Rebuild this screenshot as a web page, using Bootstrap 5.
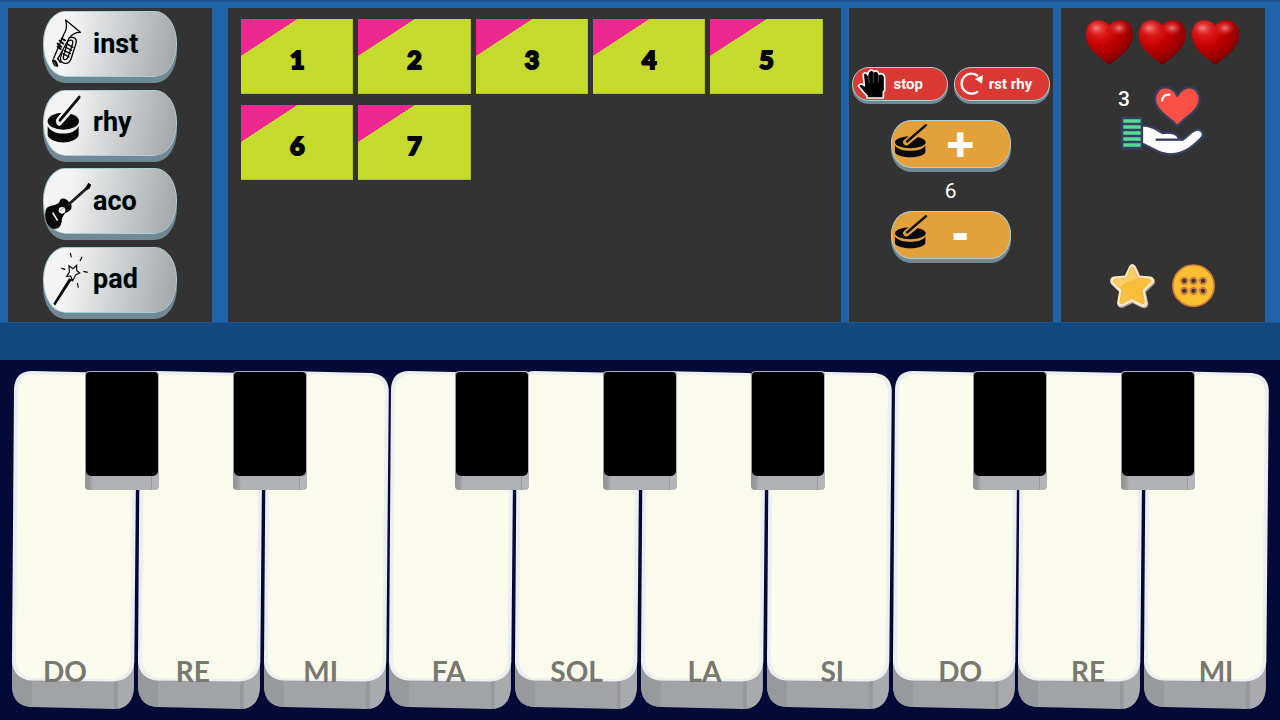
<!DOCTYPE html>
<html lang="en">
<head>
<meta charset="utf-8">
<meta name="viewport" content="width=device-width, initial-scale=1">
<title>Piano</title>
<link href="https://cdn.jsdelivr.net/npm/bootstrap@5.3.0/dist/css/bootstrap.min.css" rel="stylesheet">
<style>
  body { background: #040a38; font-family: Roboto, sans-serif; }
  button { border: 0; padding: 0; background: none; }
  svg { display: block; overflow: visible; }
  symbol { overflow: visible; }
  .deck { background: #1f64a9; border-top: 2px solid #1a5292; }
  .board { display: grid; grid-template-columns: 1fr 0 3fr 1fr 1fr; column-gap: 8px; padding: 6px 15px 0 8px; }
  .panel { background: #333; min-width: 0; }
  .panel-pads { grid-column: 3; padding: 11px 18px 0 13px; }
  .ledge { height: 38px; background: #13497e; border-top: 1px solid #1a568f; }

  .caption { font-family: Roboto, sans-serif; font-weight: 700; line-height: 1; }
  .key3d { display: flex; align-items: center; border: 1px solid #a9cfdb; }
  .sound { width: 134px; height: 66px; margin-bottom: 6px; border-radius: 22px / 32px; color: #000;
    background: linear-gradient(100deg, #f4f4f4 20%, #dcddde 42%, #c2c3c4 68%, #a6a7aa 96%); box-shadow: 0 6px 0 #708995; font-size: 27px;
    text-shadow: 0 0 1px #6bd0dc; }
  .sound svg { width: 48px; height: 65px; margin-right: 1px; }
  .rhythm { width: 96px; height: 34px; margin-bottom: 3px; border-radius: 17px; background: #da3832; box-shadow: 0 3px 0 #708995; color: #fff; font-size: 15px; padding-right: 17px; }
  .rhythm svg { width: 34px; height: 34px; }
  .tempo { width: 120px; height: 48px; margin-bottom: 4px; border-radius: 20px / 23px; background: #e3a03b; box-shadow: 0 4px 0 #708995; color: #fff;
    font: 700 36px/1 "DejaVu Sans", sans-serif; padding-right: 21px; -webkit-text-stroke: 2px #fff; text-shadow: 0 -1px 0 #ffe500; }
  .tempo svg { width: 40px; height: 47px; }
  .count { color: #fff; font-size: 21px; line-height: 39px; }

  .pads { display: grid; grid-template-columns: repeat(5, 1fr); gap: 11px 5px; }
  .pad { height: 75px; color: #000; font: 900 25px/1 Lato, sans-serif; padding-top: 6px; -webkit-text-stroke: 2px #000;
    background: linear-gradient(to bottom right, #ee2891 50%, transparent 50.5%) 0 0 / 50% 49% no-repeat #c6d92d;
    box-shadow: inset -1px -1px 0 #b1c22b; }

  .hearts { gap: 6px; margin-top: 12px; }
  .hearts svg { width: 47px; height: 45px; }
  .gift { width: 86px; margin-top: 20px; }
  .gift span { position: absolute; top: 0; left: -2px; line-height: 28px; font-size: 21px; font-weight: 500; color: #fff; }
  .extras { gap: 17px; margin-bottom: 13px; }

  .piano { padding: 11px 14px 11px 12px; }
  .ivories { display: grid; grid-template-columns: repeat(10, 1fr); column-gap: 4px; height: 100%; }
  .ivories svg { width: 100%; height: 100%; }
  .ebonies { position: absolute; inset: 11px 11px auto 11px; height: 33%; display: grid; grid-template-columns: repeat(17, 1fr); pointer-events: none; }
  .ebonies button { pointer-events: auto; border-radius: 4px; padding: 1px 1px 14px; grid-row: 1;
    background: linear-gradient(90deg, #95969a 0 5%, #b0b1b5 11% 89%, #96979b 90%, #b4b5b9 91%); }
  .ebonies i { display: block; height: 100%; background: #000; border-radius: 4px 4px 5px 5px; }
  .notes { position: absolute; inset: auto 0 32px 0; display: grid; grid-template-columns: repeat(10, 1fr); pointer-events: none;
    text-align: center; padding-left: 1px; color: #77786f; font: 700 28px/34px Lato, sans-serif; }
</style>
</head>
<body>
<svg width="0" height="0" class="position-absolute" aria-hidden="true">
  <defs>
    <radialGradient id="shine" cx=".28" cy=".2" r=".95"><stop offset="0" stop-color="#e83c3c"/><stop offset=".2" stop-color="#d81414"/><stop offset=".4" stop-color="#c40000"/><stop offset=".7" stop-color="#900"/><stop offset="1" stop-color="#400"/></radialGradient>
    <radialGradient id="glint"><stop offset="0" stop-color="#f59a98" stop-opacity=".8"/><stop offset="1" stop-color="#e03030" stop-opacity="0"/></radialGradient>
    <linearGradient id="gold" x1="0" y1="1" x2=".5" y2="0"><stop offset="0" stop-color="#f8c550"/><stop offset=".5" stop-color="#f7bd35"/><stop offset="1" stop-color="#f6c04a"/></linearGradient>
    <symbol id="heart" viewBox="78 63 139 132">
      <path d="M147 79 C157 66 171 63 182 63 C204 64 217 82 217 105 C217 147 176 171 147 195 C118 171 78 147 78 105 C78 82 91 63 113 63 C126 63 139 68 147 79Z" fill="url(#shine)"/>
      <ellipse cx="176" cy="86" rx="30" ry="23" fill="url(#glint)"/><ellipse cx="108" cy="86" rx="30" ry="23" fill="url(#glint)"/>
    </symbol>
    <symbol id="drum" viewBox="162 210 98 104" preserveAspectRatio="none">
      <path d="M162 277 C170 289 190 293 208 293 C226 293 246 289 253 277 V297 C249 307 228 312 208 312 C188 312 166 307 162 297Z" fill="#050708"/>
      <ellipse cx="208" cy="267" rx="46" ry="18" fill="#050708"/>
      <path d="M196 267 L232 238" stroke="var(--face)" stroke-width="19" stroke-linecap="round"/>
      <path d="M198 265 L255 216" stroke="#050708" stroke-width="7" stroke-linecap="round"/>
    </symbol>
    <symbol id="ivory" viewBox="0 0 122 338" preserveAspectRatio="none">
      <path d="M0 280 L122 280 V317 Q121 337 102 338 L20 336 Q1 335 0 316Z" fill="#a2a3a7"/>
      <path d="M0 285 V316 Q1 335 20 336 V300Z" fill="#98999d"/>
      <path d="M102 300 H106 V337.500 H102Z" fill="#98999d"/>
      <path d="M106 305 L122 285 V317 Q121 335 106 338Z" fill="#a9aaae"/>
      <path d="M2 18 Q3 0 20 0 L108 2 Q124 4 125 19 L122.500 291 Q121 309 102 310.500 L19 309.500 Q2 308 0 291Z" fill="#eceef0"/>
      <path d="M6 18 Q7 4 22 3.500 L106 5 Q120 7 121 20 L118.500 290 Q117 306 102 308 L20 307 Q5 305 4 289Z" fill="#fbfbed"/>
    </symbol>
  </defs>
</svg>

<main class="vh-100">
  <section class="deck h-50 d-flex flex-column">
    <div class="board flex-grow-1">
      <div class="panel d-flex flex-column align-items-center justify-content-around">
        <button class="sound key3d caption">
          <svg viewBox="135 33 144 195" fill="none" stroke="#050708" stroke-width="4" stroke-linejoin="round" stroke-linecap="round">
            <path d="M200 57 L244 94 C230 93 220 99 211 111 L176 174 M200 57 C205 74 203 87 194 101 L164 172"/>
            <path d="M161 177 Q173 178 176 195 L168 194 Q161 187 161 177Z" fill="#f2f2f2"/>
            <path d="M165 181 L174 194 M176 172 L184 184"/>
            <path d="M211 110 Q236 106 231 127 L216 174 C210 192 186 191 184 173 L190 150"/>
            <path d="M207 120 C220 114 223 120 221 128 L208 166 C204 179 192 179 193 168Z"/>
            <path d="M203 128 L222 139 M199 138 L218 148 M195 148 L214 158 M192 158 L210 168"/>
            <path d="M176 128 L187 137 M182 119 L193 128 M188 113 L198 118 M176 137 L185 144" stroke-width="6"/>
          </svg>inst</button>
        <button class="sound key3d caption" style="--face:#f0f0f0">
          <svg viewBox="135 267 144 195"><use href="#drum" x="146" y="280" width="100" height="147"/></svg>rhy</button>
        <button class="sound key3d caption">
          <svg viewBox="135 21 144 195">
            <path d="M143 139 C151 129 167 132 178 124 C184 119 180 113 188 110 C197 107 207 114 210 121 C217 124 220 133 216 142 C211 152 199 150 195 158 C187 167 190 179 185 190 C178 203 163 204 152 194 C138 182 135 152 143 139Z" fill="#050708"/>
            <path d="M194 141 L264 78" stroke="#050708" stroke-width="8"/><path d="M259 78 L268 62 L277 68 L272 79 L264 85Z" fill="#050708"/>
            <path d="M207 130 L260 82" stroke="#fff" stroke-width="1.500" stroke-dasharray="3 4"/>
            <circle cx="189" cy="145" r="10" fill="#f4f4f4"/><path d="M182 147 L198 134" stroke="#888" stroke-width="2"/>
            <path d="M161 152 L176 176" stroke="#f4f4f4" stroke-width="5"/>
          </svg>aco</button>
        <button class="sound key3d caption">
          <svg viewBox="135 258 144 195" fill="none" stroke="#050708" stroke-width="3.500">
            <path d="M218 357 L213 361 L168 431 L165 428 L211 354Z" fill="#050708"/>
            <path d="M210 314 L222 323 L233 313 L233 329 L242 336 L230 342 L221 359 L215 345 L203 346 L211 333Z" fill="#f3f3f3"/>
            <path d="M214 276 L217 289 M249 287 L243 300 M187 322 L199 325 M253 331 L266 334 M235 366 L238 380"/>
          </svg>pad</button>
      </div>

      <div class="panel panel-pads">
        <div class="pads">
          <button class="pad">1</button><button class="pad">2</button><button class="pad">3</button><button class="pad">4</button><button class="pad">5</button><button class="pad">6</button><button class="pad">7</button>
        </div>
      </div>

      <div class="panel d-flex flex-column align-items-center justify-content-center">
        <div class="d-flex mb-3" style="gap:6px">
          <button class="rhythm key3d caption">
            <svg viewBox="34 34 102 102"><path d="M50 91 C53 84 62 83 68 90 L65 62 C63 49 75 48 78 58 L79 52 C82 42 92 40 96 48 C104 43 111 47 112 56 C121 51 130 56 129 68 V104 L125 110 V127 H76 V120 C64 111 60 100 50 91Z" fill="#000" stroke="#fff" stroke-width="5" stroke-linejoin="round"/><path d="M80 58 L83 82 M95 48 V82 M111 56 L109 82" stroke="#777" stroke-width="2"/></svg>
            <span class="flex-fill">stop</span></button>
          <button class="rhythm key3d caption">
            <svg viewBox="340 34 102 102"><path d="M409 61 A30 30 0 1 0 409 107" fill="none" stroke="#fff" stroke-width="7"/><path d="M424 58 L421 84 L400 70Z" fill="#fff"/></svg>
            <span class="flex-fill text-nowrap">rst rhy</span></button>
        </div>
        <button class="tempo key3d" style="--face:#e3a03b">
          <svg viewBox="153 204 120 140"><use href="#drum" x="162" y="210" width="98" height="104"/></svg><span class="flex-fill">+</span></button>
        <div class="count">6</div>
        <button class="tempo key3d" style="--face:#e3a03b">
          <svg viewBox="153 204 120 140"><use href="#drum" x="162" y="210" width="98" height="104"/></svg><span class="flex-fill">-</span></button>
      </div>

      <div class="panel d-flex flex-column align-items-center">
        <div class="hearts d-flex">
          <svg><use href="#heart"/></svg><svg><use href="#heart"/></svg><svg><use href="#heart"/></svg>
        </div>
        <button class="gift position-relative" aria-label="Give a heart">
          <svg viewBox="178 258 258 213" width="86" height="71" stroke="#34415e" stroke-width="7" stroke-linejoin="round">
            <path d="M350 290 C361 272 372 265 385 265 C407 265 418 284 417 302 C416 334 376 354 350 381 C324 354 284 334 283 302 C282 284 294 265 316 265 C330 265 342 274 350 290Z" fill="#f94f44"/>
            <path d="M304 305 Q307 286 326 287" fill="none" stroke="#fff" stroke-linecap="round"/>
            <path d="M244 380 C275 377 288 394 306 402 C330 398 352 405 353 417 L366 422 C382 412 396 391 413 392 C426 393 431 407 423 416 C403 436 374 466 330 466 C293 466 272 444 244 434Z" fill="#fff"/>
            <path d="M285 422 H366" fill="none"/>
            <path d="M184 357 H243 V449 H184Z" fill="#34415e"/>
            <path d="M188 366 H240 M188 384 H240 M188 402 H240 M188 420 H240 M188 438 H240" stroke="#58db98" stroke-width="10"/>
          </svg>
          <span>3</span>
        </button>
        <div class="extras d-flex mt-auto">
          <button aria-label="Favourites">
            <svg viewBox="147 65 135 136" width="45" height="46">
              <path d="M207 75 Q214 64 221 75 L234 104 L269 107 Q282 113 274 124 L249 148 L257 185 Q254 197 241 192 L213 178 L183 192 Q170 194 171 182 L177 148 L152 124 Q146 111 158 107 L193 104Z" fill="#a99a83" stroke="#a99a83" stroke-width="7" stroke-linejoin="round" transform="translate(2 3)"/>
              <path d="M207 75 Q214 64 221 75 L234 104 L269 107 Q282 113 274 124 L249 148 L257 185 Q254 197 241 192 L213 178 L183 192 Q170 194 171 182 L177 148 L152 124 Q146 111 158 107 L193 104Z" fill="#fbe8c8" stroke="#fbe8c8" stroke-width="5" stroke-linejoin="round"/>
              <path d="M209 80 Q214 72 218 80 L230 109 L266 113 Q272 116 267 122 L243 145 L250 182 Q248 188 242 185 L213 170 L183 186 Q177 187 177 180 L184 145 L159 122 Q155 115 162 113 L198 109Z" fill="url(#gold)" stroke="#f2b52c" stroke-width="3"/>
              <path d="M209 80 Q214 72 218 80 L229 110 Q186 122 178 138 L159 122 Q155 115 162 113 L198 109Z" fill="#fbd787" opacity=".6"/>
            </svg></button>
          <button aria-label="More">
            <svg viewBox="333 66 129 131" width="43" height="44">
              <circle cx="397.500" cy="130.500" r="62" fill="#f9bf2e" stroke="#d17e38" stroke-width="5"/>
              <g fill="#3b3634" stroke="#cd7c3e" stroke-width="6"><circle cx="370" cy="116" r="9.500"/><circle cx="397.500" cy="116" r="9.500"/><circle cx="426" cy="116" r="9.500"/><circle cx="370" cy="146" r="9.500"/><circle cx="397.500" cy="146" r="9.500"/><circle cx="426" cy="146" r="9.500"/></g>
            </svg></button>
        </div>
      </div>
    </div>
    <div class="ledge"></div>
  </section>

  <section class="piano h-50 position-relative">
    <div class="ivories">
      <button aria-labelledby="n1"><svg><use href="#ivory"/></svg></button>
      <button aria-labelledby="n2"><svg><use href="#ivory"/></svg></button>
      <button aria-labelledby="n3"><svg><use href="#ivory"/></svg></button>
      <button aria-labelledby="n4"><svg><use href="#ivory"/></svg></button>
      <button aria-labelledby="n5"><svg><use href="#ivory"/></svg></button>
      <button aria-labelledby="n6"><svg><use href="#ivory"/></svg></button>
      <button aria-labelledby="n7"><svg><use href="#ivory"/></svg></button>
      <button aria-labelledby="n8"><svg><use href="#ivory"/></svg></button>
      <button aria-labelledby="n9"><svg><use href="#ivory"/></svg></button>
      <button aria-labelledby="n10"><svg><use href="#ivory"/></svg></button>
    </div>
    <div class="ebonies">
      <button aria-label="DO sharp" style="grid-column:2"><i></i></button>
      <button aria-label="RE sharp" style="grid-column:4"><i></i></button>
      <button aria-label="FA sharp" style="grid-column:7"><i></i></button>
      <button aria-label="SOL sharp" style="grid-column:9"><i></i></button>
      <button aria-label="LA sharp" style="grid-column:11"><i></i></button>
      <button aria-label="DO sharp" style="grid-column:14"><i></i></button>
      <button aria-label="RE sharp" style="grid-column:16"><i></i></button>
    </div>
    <div class="notes">
      <span id="n1">DO</span><span id="n2">RE</span><span id="n3">MI</span><span id="n4">FA</span><span id="n5">SOL</span><span id="n6">LA</span><span id="n7">SI</span><span id="n8">DO</span><span id="n9">RE</span><span id="n10">MI</span>
    </div>
  </section>
</main>
<script src="https://cdn.jsdelivr.net/npm/bootstrap@5.3.0/dist/js/bootstrap.bundle.min.js"></script>
</body>
</html>
